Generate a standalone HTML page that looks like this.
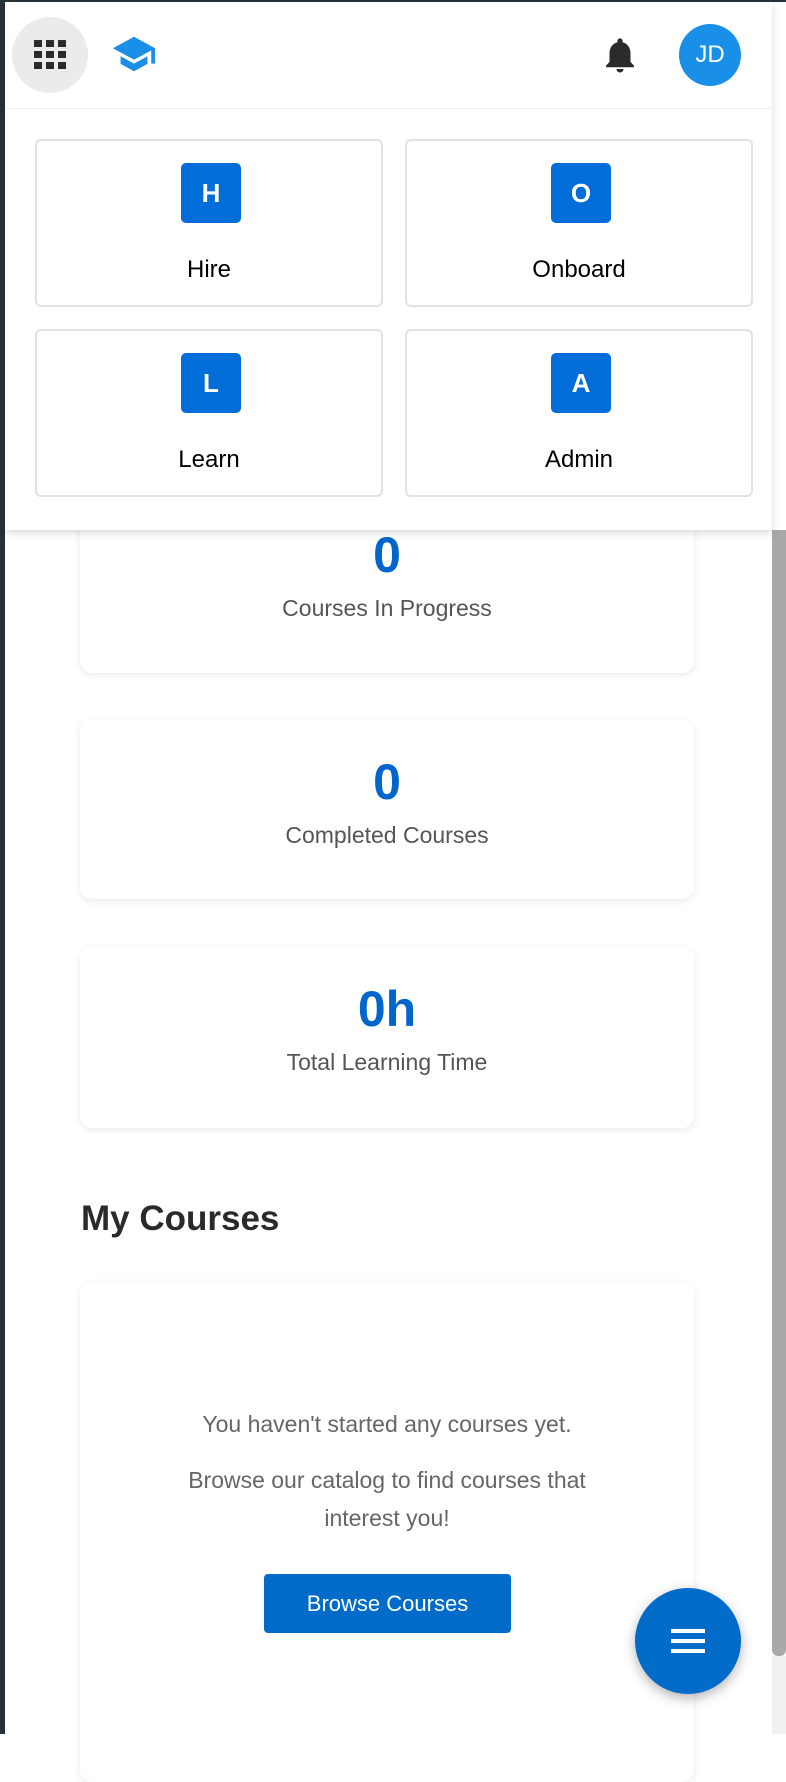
<!DOCTYPE html>
<html><head><meta charset="utf-8"><style>
html,body{margin:0;padding:0}
body{width:786px;height:1734px;position:relative;overflow:hidden;background:#fff;font-family:"Liberation Sans",Arial,sans-serif}
.abs{position:absolute}
.card{position:absolute;left:80px;width:614px;background:#fff;border-radius:12px;box-shadow:0 2px 8px rgba(0,0,0,0.09);text-align:center}
.num{position:absolute;left:0;right:0;color:#0066cc;font-weight:bold;font-size:50px;line-height:50px}
.lbl{position:absolute;left:0;right:0;color:#555;font-size:23px;line-height:26px}
.tile{position:absolute;width:348px;height:168px;border:2px solid #e2e2e2;border-radius:6px;box-sizing:border-box;background:#fff}
.sq{position:absolute;left:144px;top:22px;width:60px;height:60px;background:#006dd9;border-radius:5px;color:#fff;font-weight:bold;font-size:26px;line-height:60px;text-align:center}
.tl{position:absolute;left:0;right:0;top:115px;text-align:center;font-size:24px;color:#000}
</style></head><body>
<div class="abs" style="left:0;top:0;width:5px;height:1734px;background:#263238"></div>
<div class="abs" style="left:0;top:0;width:786px;height:2px;background:#263238"></div>
<!-- scrollbar -->
<div class="abs" style="left:772px;top:530px;width:14px;height:1126px;background:#a9a9a9;border-radius:0 0 6px 6px"></div>
<div class="abs" style="left:772px;top:1656px;width:14px;height:78px;background:#f1f1f1"></div>

<!-- stat cards -->
<div class="card" style="top:480px;height:193px">
 <div class="num" style="top:50px">0</div>
 <div class="lbl" style="top:115px">Courses In Progress</div>
</div>
<div class="card" style="top:720px;height:179px">
 <div class="num" style="top:37px">0</div>
 <div class="lbl" style="top:102px">Completed Courses</div>
</div>
<div class="card" style="top:947px;height:181px">
 <div class="num" style="top:37px">0h</div>
 <div class="lbl" style="top:102px">Total Learning Time</div>
</div>

<div class="abs" style="left:81px;top:1199px;font-size:35px;font-weight:bold;color:#2a2a2a;line-height:40px">My Courses</div>
<div class="card" style="top:1282px;height:500px">
 <div class="lbl" style="top:129px;color:#666;font-size:23px">You haven't started any courses yet.</div>
 <div class="lbl" style="top:179px;color:#666;font-size:23px;line-height:38px;padding:0 90px">Browse our catalog to find courses that interest you!</div>
 <div class="abs" style="left:184px;top:292px;width:247px;height:59px;background:#006bc8;border-radius:4px;color:#fff;font-size:22px;line-height:59px">Browse Courses</div>
</div>

<!-- FAB -->
<div class="abs" style="left:635px;top:1588px;width:106px;height:106px;border-radius:50%;background:#006bc8;box-shadow:0 4px 12px rgba(0,0,0,0.3)">
 <div class="abs" style="left:36px;top:41px;width:34px;height:4px;background:#fff"></div>
 <div class="abs" style="left:36px;top:51px;width:34px;height:4px;background:#fff"></div>
 <div class="abs" style="left:36px;top:61px;width:34px;height:4px;background:#fff"></div>
</div>

<!-- header + panel -->
<div class="abs" style="left:5px;top:2px;width:767px;height:528px;background:#fff;box-shadow:0 3px 8px rgba(0,0,0,0.15)">
 <div class="abs" style="left:0;top:106px;width:767px;height:1px;background:#f0f0f0"></div>
</div>
<div class="abs" style="left:12px;top:17px;width:76px;height:76px;border-radius:50%;background:#ebebeb"></div>
<svg class="abs" style="left:33px;top:39px" width="34" height="32" viewBox="0 0 34 32" fill="#2b2b2b">
 <rect x="1" y="1" width="8" height="7"/><rect x="13" y="1" width="8" height="7"/><rect x="25" y="1" width="8" height="7"/>
 <rect x="1" y="12" width="8" height="7"/><rect x="13" y="12" width="8" height="7"/><rect x="25" y="12" width="8" height="7"/>
 <rect x="1" y="23" width="8" height="7"/><rect x="13" y="23" width="8" height="7"/><rect x="25" y="23" width="8" height="7"/>
</svg>
<svg class="abs" style="left:111px;top:31px" width="46" height="46" viewBox="0 0 24 24" fill="#1a8fe8"><path d="M5 13.18v4L12 21l7-3.82v-4L12 17l-7-3.82zM12 3L1 9l11 6 9-4.91V17h2V9L12 3z"/></svg>
<svg class="abs" style="left:599px;top:34px" width="42" height="42" viewBox="0 0 24 24" fill="#2b2b2b"><path d="M12 22c1.1 0 2-.9 2-2h-4c0 1.1.9 2 2 2zm6-6v-5c0-3.07-1.63-5.64-4.5-6.32V4c0-.83-.67-1.5-1.5-1.5s-1.5.67-1.5 1.5v.68C7.64 5.360 6 7.92 6 11v5l-2 2v1h16v-1l-2-2z"/></svg>
<div class="abs" style="left:679px;top:24px;width:62px;height:62px;border-radius:50%;background:#1a8fe8;color:#fff;font-size:24px;line-height:62px;text-align:center">JD</div>

<div class="tile" style="left:35px;top:139px"><div class="sq">H</div><div class="tl">Hire</div></div>
<div class="tile" style="left:405px;top:139px"><div class="sq">O</div><div class="tl">Onboard</div></div>
<div class="tile" style="left:35px;top:329px"><div class="sq">L</div><div class="tl">Learn</div></div>
<div class="tile" style="left:405px;top:329px"><div class="sq">A</div><div class="tl">Admin</div></div>
</body></html>
